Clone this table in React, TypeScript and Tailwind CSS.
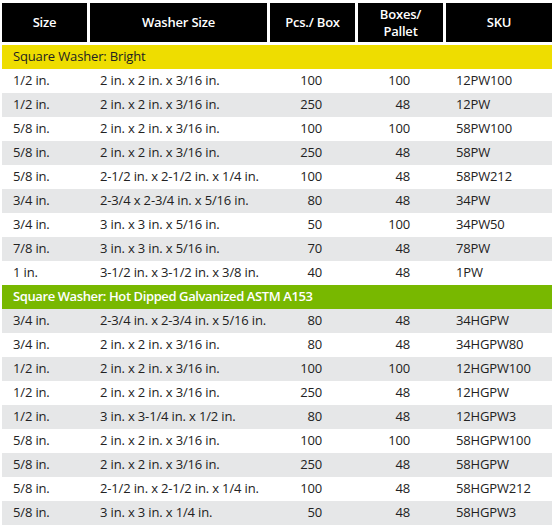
import React from 'react';

type Row = [string, string, string, string, string];

interface Section {
  title: string;
  variant: 'yellow' | 'green';
  rows: Row[];
}

const sections: Section[] = [
  {
    title: 'Square Washer: Bright',
    variant: 'yellow',
    rows: [
      ['1/2 in.', '2 in. x 2 in. x 3/16 in.', '100', '100', '12PW100'],
      ['1/2 in.', '2 in. x 2 in. x 3/16 in.', '250', '48', '12PW'],
      ['5/8 in.', '2 in. x 2 in. x 3/16 in.', '100', '100', '58PW100'],
      ['5/8 in.', '2 in. x 2 in. x 3/16 in.', '250', '48', '58PW'],
      ['5/8 in.', '2-1/2 in. x 2-1/2 in. x 1/4 in.', '100', '48', '58PW212'],
      ['3/4 in.', '2-3/4 x 2-3/4 in. x 5/16 in.', '80', '48', '34PW'],
      ['3/4 in.', '3 in. x 3 in. x 5/16 in.', '50', '100', '34PW50'],
      ['7/8 in.', '3 in. x 3 in. x 5/16 in.', '70', '48', '78PW'],
      ['1 in.', '3-1/2 in. x 3-1/2 in. x 3/8 in.', '40', '48', '1PW'],
    ],
  },
  {
    title: 'Square Washer: Hot Dipped Galvanized ASTM A153',
    variant: 'green',
    rows: [
      ['3/4 in.', '2-3/4 in. x 2-3/4 in. x 5/16 in.', '80', '48', '34HGPW'],
      ['3/4 in.', '2 in. x 2 in. x 3/16 in.', '80', '48', '34HGPW80'],
      ['1/2 in.', '2 in. x 2 in. x 3/16 in.', '100', '100', '12HGPW100'],
      ['1/2 in.', '2 in. x 2 in. x 3/16 in.', '250', '48', '12HGPW'],
      ['1/2 in.', '3 in. x 3-1/4 in. x 1/2 in.', '80', '48', '12HGPW3'],
      ['5/8 in.', '2 in. x 2 in. x 3/16 in.', '100', '100', '58HGPW100'],
      ['5/8 in.', '2 in. x 2 in. x 3/16 in.', '250', '48', '58HGPW'],
      ['5/8 in.', '2-1/2 in. x 2-1/2 in. x 1/4 in.', '100', '48', '58HGPW212'],
      ['5/8 in.', '3 in. x 3 in. x 1/4 in.', '50', '48', '58HGPW3'],
    ],
  },
];

function HeaderCell({ className, children }: { className: string; children: React.ReactNode }) {
  return (
    <div className={`${className} h-[39px] bg-black text-white font-semibold text-[13px] leading-[17px] tracking-[-0.2px] flex items-center justify-center text-center`}>
      {children}
    </div>
  );
}

export default function App() {
  let stripe = 0;

  return (
    <div className="w-[553px] h-[525px] bg-white pl-[2px] pt-[3px] text-[#222] overflow-hidden" style={{ fontFamily: '"Open Sans", "Noto Sans", sans-serif' }}>
      <div className="flex gap-[3px]">
        <HeaderCell className="w-[85px]">Size</HeaderCell>
        <HeaderCell className="w-[177px]">Washer Size</HeaderCell>
        <HeaderCell className="w-[85px]">Pcs./ Box</HeaderCell>
        <HeaderCell className="w-[85px]">Boxes/<br />Pallet</HeaderCell>
        <HeaderCell className="w-[106px]">SKU</HeaderCell>
      </div>

      <div className="mt-[3px] w-[550px]">
        {sections.map((section) => (
          <div key={section.title}>
            <div
              className={
                section.variant === 'yellow'
                  ? 'h-[24px] px-[11px] flex items-center text-[13px] tracking-[-0.15px] bg-[#eedd00] text-[#222]'
                  : 'h-[24px] px-[11px] flex items-center text-[13px] tracking-[-0.4px] bg-[#78b800] text-white font-semibold'
              }
            >
              {section.title}
            </div>
            {section.rows.map((row, i) => {
              const gray = stripe++ % 2 === 1;
              return (
                <div key={i} className={`flex gap-[3px] h-[24px] items-center text-[13px] tracking-[-0.15px] ${gray ? 'bg-[#e6e7e8]' : 'bg-white'}`}>
                  <div className="w-[85px] pl-[11px]">{row[0]}</div>
                  <div className="w-[177px] pl-[10px] whitespace-nowrap">{row[1]}</div>
                  <div className="w-[85px] pr-[33px] text-right">{row[2]}</div>
                  <div className="w-[85px] pr-[33px] text-right">{row[3]}</div>
                  <div className="w-[106px] pl-[10px]">{row[4]}</div>
                </div>
              );
            })}
          </div>
        ))}
      </div>
    </div>
  );
}
